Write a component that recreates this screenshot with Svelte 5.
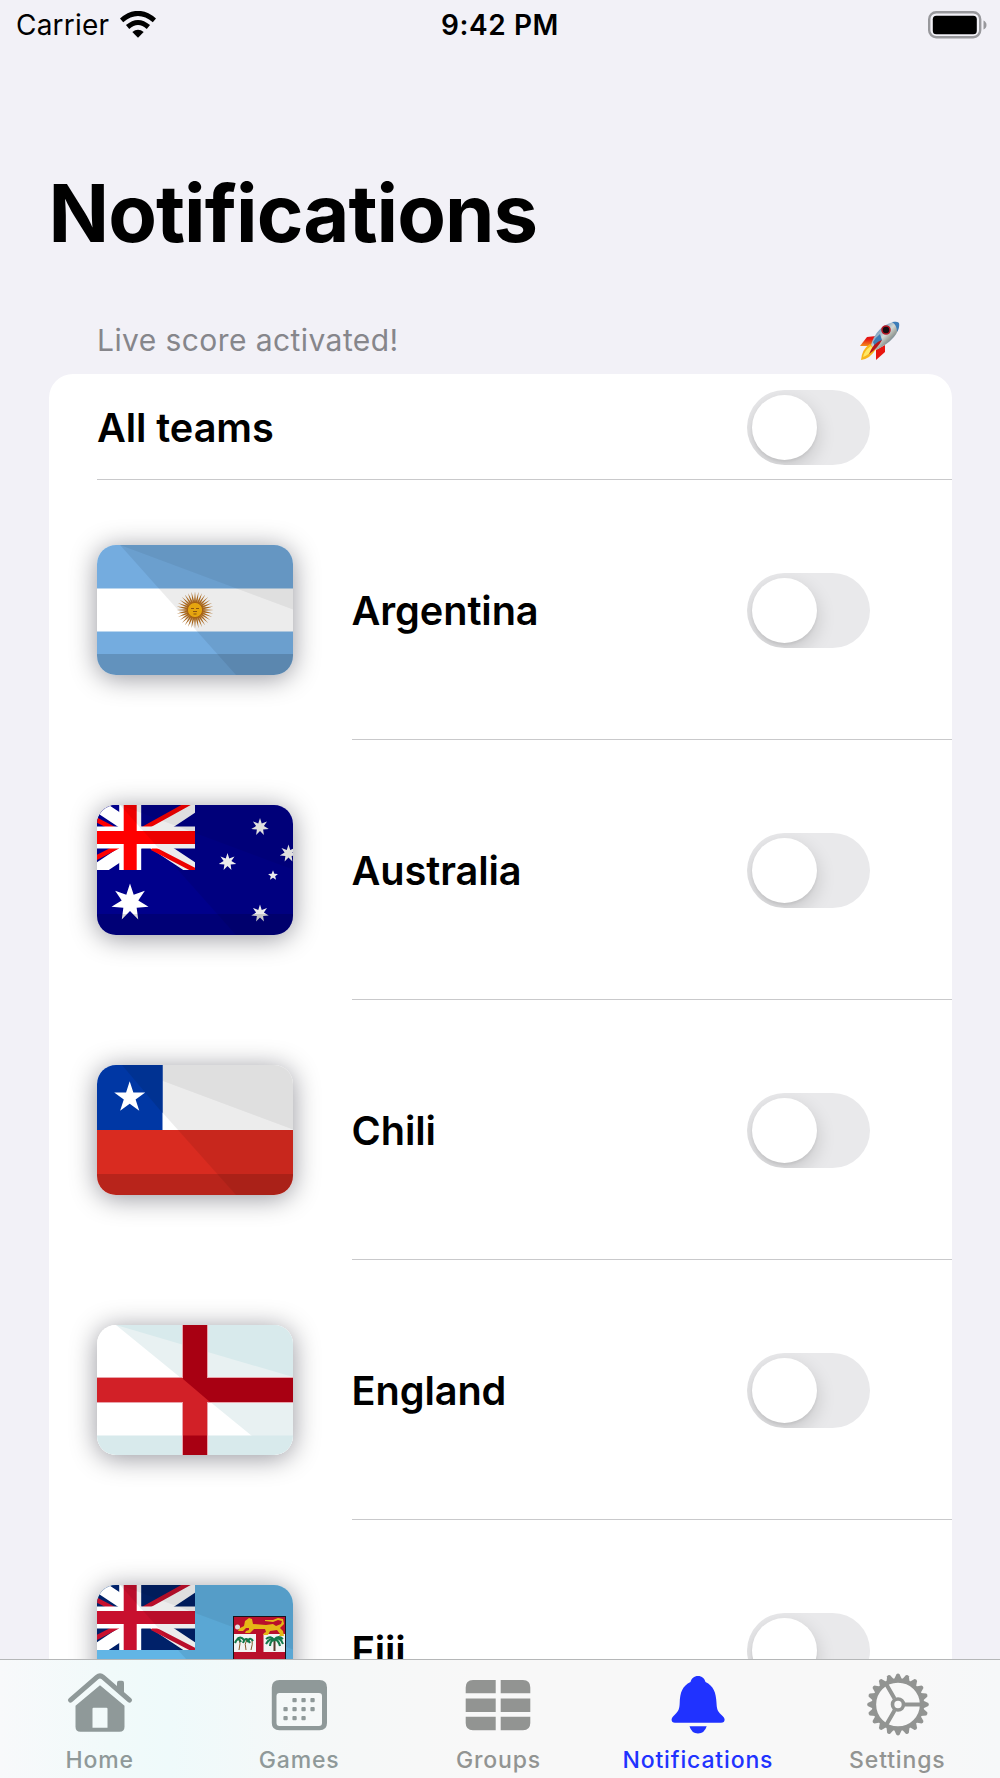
<script>
  const teams = ['Argentina', 'Australia', 'Chili', 'England', 'Fiji'];
  const tabs = ['Home', 'Games', 'Groups', 'Notifications', 'Settings'];
  const teeth = Array.from({ length: 20 }, (_, i) => i * 18);
  const rays = Array.from({ length: 32 }, (_, i) => i * 11.25);
  const dots = [
    [23, 20], [32, 20], [41, 20],
    [14, 29], [23, 29], [32, 29], [41, 29],
    [14, 38], [23, 38], [32, 38]
  ];

  function star(cx, cy, n, outer, inner) {
    const pts = [];
    for (let i = 0; i < n * 2; i++) {
      const r = i % 2 ? inner : outer;
      const a = (Math.PI * i) / n - Math.PI / 2;
      pts.push(`${(cx + r * Math.cos(a)).toFixed(2)},${(cy + r * Math.sin(a)).toFixed(2)}`);
    }
    return pts.join(' ');
  }
</script>

{#snippet toggle()}
  <span class="toggle"><span class="knob"></span></span>
{/snippet}

{#snippet unionJack(blue, red)}
  <svg class="canton" width="98" height="65" viewBox="0 0 98 65">
    <rect width="98" height="65" fill={blue} />
    <path d="M0 0L98 65M98 0L0 65" stroke="#fff" stroke-width="13" />
    <path d="M-3 13.5L21 26M55 43L101 67M44 25L98 -5M-3 54L22 41" stroke={red} stroke-width="4.6" />
    <path d="M33.2 0V65M0 32.5H98" stroke="#fff" stroke-width="22" />
    <path d="M33.2 0V65M0 32.5H98" stroke={red} stroke-width="13" />
  </svg>
{/snippet}

{#snippet shade()}
  <path d="M23 0H196V130H139Z" fill="#000" opacity=".075" />
  <path d="M23 0H196V64.500Z" fill="#000" opacity=".055" />
  <path d="M0 109H196V130H0Z" fill="#000" opacity=".15" />
{/snippet}

{#snippet flag(name)}
  <svg class="flag" viewBox="0 0 196 130" width="196" height="130">
    {#if name === 'Argentina'}
      <rect width="196" height="130" fill="#74acdf" />
      <rect y="43.500" width="196" height="43" fill="#fff" />
      {@render shade()}
      <g transform="translate(98 65)">
        {#each rays as a}
          <path d="M-1.100 -7L0 -18.500L1.100 -7Z" fill="#a8661c" transform="rotate({a})" />
        {/each}
        <circle r="7.600" fill="#e5a50f" stroke="#a35f16" />
        <path d="M-4 -1.500h3M1 -1.500h3M-2 1.500h4M-1.500 4h3" stroke="#8c5410" stroke-width="1.200" />
      </g>
    {:else if name === 'Australia'}
      <rect width="196" height="130" fill="#00008b" />
      {@render unionJack('#00008b', '#f00')}
      <g fill="#fff">
        <polygon points={star(33, 97.5, 7, 19, 8.5)} />
        <polygon points={star(163, 22, 7, 9, 4)} />
        <polygon points={star(130.500, 57, 7, 9, 4)} />
        <polygon points={star(191.500, 48.500, 7, 9, 4)} />
        <polygon points={star(163, 108.500, 7, 9, 4)} />
        <polygon points={star(176, 70.500, 5, 5.200, 2.300)} />
      </g>
      {@render shade()}
    {:else if name === 'Chili'}
      <rect width="196" height="130" fill="#fff" />
      <rect y="65" width="196" height="65" fill="#d92b20" />
      {@render shade()}
      <rect width="65.500" height="65" fill="#0037a4" />
      <path d="M25 0H65.500V48Z" fill="#003292" />
      <polygon points={star(32.700, 32.500, 5, 16.300, 6.200)} fill="#fff" />
    {:else if name === 'England'}
      <rect width="196" height="130" fill="#fff" />
      <path d="M19 0H196V111H155Z" fill="#e8f1f2" />
      <path d="M19 0H196V52Z" fill="#d8eaec" />
      <rect y="110.500" width="196" height="20" fill="#d8eaec" />
      <path d="M98 0V130M0 65H196" stroke="#e9a3ab" stroke-width="26" />
      <path d="M98 0V130M0 65H196" stroke="#d22027" stroke-width="24" />
      <path d="M86 0H110V53H196V77H113L86 54ZM86 110.500H110V130H86Z" fill="#a80012" />
    {:else}
      <rect width="196" height="130" fill="#62b5e5" />
      {@render unionJack('#002169', '#c8102e')}
      {@render shade()}
      <rect x="136.500" y="31.500" width="52" height="70" fill="#b90f2b" stroke="#15151b" />
      <path d="M137 49H159V67H137ZM166.500 49H188V67H166.500Z" fill="#f3f3f3" />
      <path d="M141 44l6-3 1-5 4-3 3 1 1 5 13 1 7-1 3 2 5-2 1-3-4-1-5 2-8-1v-1l8 0 5-2 5 1 1 5-4 4 3 3 1 5h-5l1-2-3-4-7 1-2 4h-5l1-2 2-1-1-3-11 0-4 4h-5l1-2 3-1v-2l-3 0-3 3h-5l1-2Z" fill="#e5b816" />
      <circle cx="140.500" cy="42" r="2.500" fill="#ddd" />
      <path d="M142 65q2-7 0-11m7 11q-2-6 1-11m4 11q2-6 1-11" stroke="#875728" fill="none" />
      <path d="M177.500 66V54" stroke="#543b2b" stroke-width="2" />
      <path d="M138 58q3-7 6-1M146 58q3-8 7 0M150 57q3-6 6-1M140 54q4-3 7 1M169 59q4-7 9-4q5-4 8 4M169 54q5-4 8 1q4-5 9-1M173 61q0-5 5-7q4 2 5 7" stroke="#13794a" stroke-width="2.100" fill="none" />
    {/if}
  </svg>
{/snippet}

{#snippet tabIcon(name)}
  {#if name === 'Home'}
    <svg class="icon" viewBox="0 -0.7 66 66" width="66" height="66">
      <path d="M3.500 33.500L30 10.500Q33 8 36 10.500L62.500 33.500" fill="none" stroke="currentColor" stroke-width="5" stroke-linecap="round" />
      <path fill="currentColor" d="M50 16q0-2 2-2h3q2 0 2 2V29L50 23Z" />
      <path fill="currentColor" fill-rule="evenodd" d="M33 18.500L57.500 39V60q0 5-5 5h-39q-5 0-5-5V39ZM26.500 41q-1 0-1 1V61H40.500V42q0-1-1-1Z" />
    </svg>
  {:else if name === 'Games'}
    <svg class="icon" viewBox="-5.5 -14 66 66" width="66" height="66">
      <path fill="currentColor" fill-rule="evenodd" d="M8 0H48Q55.500 0 55.500 7.500V43Q55.500 50.300 48 50.300H8Q0.300 50.300 0.300 43V7.500Q0.300 0 8 0ZM8 13Q5 13 5 16V43Q5 46 8 46H47.500Q50.500 46 50.500 43V16Q50.500 13 47.500 13Z" />
      {#each dots as [x, y]}
        <rect x={x - 2.100} y={y - 2} width="4.300" height="4.300" rx="1" fill="currentColor" />
      {/each}
    </svg>
  {:else if name === 'Groups'}
    <svg class="icon" viewBox="0 -14 66 66" width="66" height="66">
      <path fill="currentColor" d="M8 0H30.700V13.300H.7V7.500Q.7 0 8 0ZM35.700 0H58Q65.300 0 65.300 7.500V13.300H35.700ZM.7 18.500H30.700V32H.7ZM35.700 18.500H65.300V32H35.700ZM.7 36.800H30.700V50.200H8Q.7 50.200 .7 43ZM35.700 36.800H65.300V43Q65.300 50.200 58 50.200H35.700Z" />
    </svg>
  {:else if name === 'Notifications'}
    <svg class="icon" viewBox="0 0 66 66" width="66" height="66">
      <path fill="currentColor" d="M33 11C37 11 39.500 13.500 40.500 17C48.500 21 51 27 51.500 38C51.800 44 52.500 46 56 49.500Q59.600 52.500 59.600 54.500Q59.600 57.800 56 57.800H10Q6.600 57.800 6.600 54.500Q6.600 52.500 10 49.500C13.500 46 14.500 44 14.700 38C15 27 17.500 21 25.500 17C26.500 13.500 29 11 33 11ZM24.500 61.300H41.700Q39.500 68.500 33 68.500Q26.500 68.500 24.500 61.300Z" transform="translate(0 -1)" />
    </svg>
  {:else}
    <svg class="icon" viewBox="-1 0 66 66" width="66" height="66">
      <g transform="translate(33 38.500)" stroke="currentColor" fill="none">
        <circle r="24" stroke-width="4.300" />
        <circle r="5.500" stroke-width="3.600" />
        <path d="M7 0H23M-3.500 -6L-12 -20.800M-3.500 6L-12 20.800" stroke-width="4" />
        {#each teeth as a}
          <path d="M25 -4L30.300 -1.600Q31.500 0 30.300 1.600L25 4Z" fill="currentColor" stroke="none" transform="rotate({a})" />
        {/each}
      </g>
    </svg>
  {/if}
{/snippet}

<div class="screen">
  <header class="status">
    <div class="carrier">
      <span class="carrier-name">Carrier</span>
      <svg viewBox="0 0 36 27" width="36" height="27">
        <path d="M1.600 9.300Q18 -4.500 34.400 9.300" fill="none" stroke="#000" stroke-width="5" />
        <path d="M7.600 16Q18 7 28.400 16" fill="none" stroke="#000" stroke-width="5" />
        <path d="M12.300 21Q18 16.500 23.700 21L18 26.700Z" />
      </svg>
    </div>
    <time>9:42 PM</time>
    <div class="battery">
      <svg viewBox="0 0 60 28" width="60" height="28">
        <rect x="1.200" y="1.200" width="51" height="25" rx="7" fill="none" stroke="#98989c" stroke-width="2.400" />
        <rect x="4.800" y="4.800" width="44" height="18.400" rx="3.500" />
        <path d="M55.500 9.500Q58.500 11 58.500 14Q58.500 17 55.500 18.500Z" fill="#98989c" />
      </svg>
    </div>
  </header>

  <h1>Notifications</h1>

  <div class="caption">
    <span>Live score activated!</span>
    <svg viewBox="0 0 42 42" width="42" height="42">
      <defs>
        <linearGradient id="hull" x1="0" y1="0" x2="1" y2="1">
          <stop offset=".200" stop-color="#4e86b8" />
          <stop offset=".480" stop-color="#d2d8d5" />
          <stop offset=".620" stop-color="#9da29b" />
          <stop offset=".850" stop-color="#29629b" />
        </linearGradient>
        <linearGradient id="fin" x1="0" y1="0" x2="0" y2="1">
          <stop offset=".300" stop-color="#e51614" />
          <stop offset="1" stop-color="#f58b1b" />
        </linearGradient>
      </defs>
      <path d="M17 16L8 17L1 26H13Z" fill="url(#fin)" />
      <path d="M26 25V32L17 40V30Z" fill="#e8150f" />
      <path d="M11 24Q3 29 2 40Q11 39 17 29Z" fill="#f7b51b" />
      <path d="M12 26Q5 31 4 37Q10 35 14 29Z" fill="#ffe865" />
      <path d="M12 25Q17 7 34 2Q38 1 40 3Q41 18 17 30Z" fill="url(#hull)" />
      <path d="M14 22Q17 17 21 14L23 20L16 27Z" fill="#3f7db5" />
      <path d="M33 2Q38 1 40 3Q41 7 38 12Q38 5 33 2Z" fill="#3c7db9" />
      <path d="M23 20Q15 22 10 34Q18 29 23 20Z" fill="#b71518" />
      <circle cx="27" cy="10" r="4" fill="#160d12" stroke="#b61724" stroke-width="1.600" />
    </svg>
  </div>

  <main class="card">
    <div class="row all">
      <span class="name">All teams</span>
      {@render toggle()}
    </div>
    {#each teams as team}
      <div class="row team">
        {@render flag(team)}
        <div class="detail">
          <span class="name">{team}</span>
          {@render toggle()}
        </div>
      </div>
    {/each}
  </main>

  <nav>
    {#each tabs as tab}
      <div class="tab tab-{tab.toLowerCase()}" class:active={tab === 'Notifications'}>
        {@render tabIcon(tab)}
        <span>{tab}</span>
      </div>
    {/each}
  </nav>
</div>

<style>
  :global(body) { margin: 0; }
  .screen {
    box-sizing: border-box;
    width: 1000px;
    height: 1778px;
    overflow: hidden;
    display: grid;
    grid-template-rows: 51px 256px 67px 1285px 119px;
    background: #f2f1f7;
    color: #000;
    font-family: Inter, "Liberation Sans", sans-serif;
  }
  .status {
    display: grid;
    grid-template-columns: 1fr auto 1fr;
    align-items: center;
    padding: 0 12px;
    font-size: 28px;
    line-height: 51px;
  }
  .carrier { display: flex; align-items: center; gap: 11px; padding-left: 4px; }
  .carrier-name { letter-spacing: .2px; }
  .carrier svg, .battery svg { display: block; }
  .carrier svg { margin-bottom: 3px; }
  time { font-weight: 600; letter-spacing: .6px; }
  .battery { justify-self: end; padding-bottom: 2px; }
  h1 {
    margin: 0;
    padding: 114px 0 0 48.500px;
    font-size: 79.500px;
    line-height: 96px;
    font-weight: 700;
    letter-spacing: -.950px;
    white-space: nowrap;
  }
  .caption {
    display: flex;
    justify-content: space-between;
    padding: 13px 99px 0 97px;
    color: #86868b;
    font-size: 30px;
    line-height: 40px;
    letter-spacing: .420px;
  }
  .card {
    margin: 0 48.500px 0 49px;
    background: #fff;
    border-radius: 24px 24px 0 0;
    overflow: hidden;
  }
  .row { box-sizing: border-box; display: flex; align-items: center; }
  .all {
    height: 106px;
    margin-left: 48px;
    padding: 2px 82px 0 0;
    border-bottom: 1px solid #c9c9cb;
    justify-content: space-between;
  }
  .team { height: 260px; padding-left: 48px; gap: 58.500px; }
  .detail {
    box-sizing: border-box;
    flex: 1;
    height: 260px;
    display: flex;
    align-items: center;
    justify-content: space-between;
    padding: 2px 82px 0 0;
    border-bottom: 1px solid #c9c9cb;
  }
  .name { font-size: 39.700px; line-height: 50px; font-weight: 600; letter-spacing: -.080px; }
  .flag { display: block; flex: none; border-radius: 19px; box-shadow: 0 3px 27px rgba(0, 0, 20, .42); }
  .canton { overflow: hidden; }
  .toggle {
    box-sizing: border-box;
    flex: none;
    width: 123px;
    height: 75px;
    padding: 5px;
    border-radius: 38px;
    background: #e9e9eb;
    overflow: hidden;
  }
  .knob {
    display: block;
    width: 65px;
    height: 65px;
    border-radius: 50%;
    background: #fff;
    box-shadow: 0 7px 19px rgba(0, 0, 0, .16), 0 2px 3px rgba(0, 0, 0, .06);
  }
  nav {
    box-sizing: border-box;
    display: grid;
    grid-template-columns: repeat(5, 1fr);
    padding-right: 3px;
    border-top: 1px solid #b5b7b8;
    background: linear-gradient(90deg, #f8f9fb 0, #f1fafa 110px, #effafb 170px, #f5f8f8 300px, #f8f8f8 480px, #f8f8f8 900px, #f6f8f9 1000px);
  }
  .tab {
    display: flex;
    flex-direction: column;
    align-items: center;
    color: #929492;
    font-size: 23px;
    line-height: 28px;
    font-weight: 500;
    letter-spacing: .850px;
  }
  .tab-home, .tab-games { color: #8f9999; }
  .icon { display: block; margin: 6px 0 14px; overflow: visible; }
  .tab.active { color: #2032ff; }
</style>
